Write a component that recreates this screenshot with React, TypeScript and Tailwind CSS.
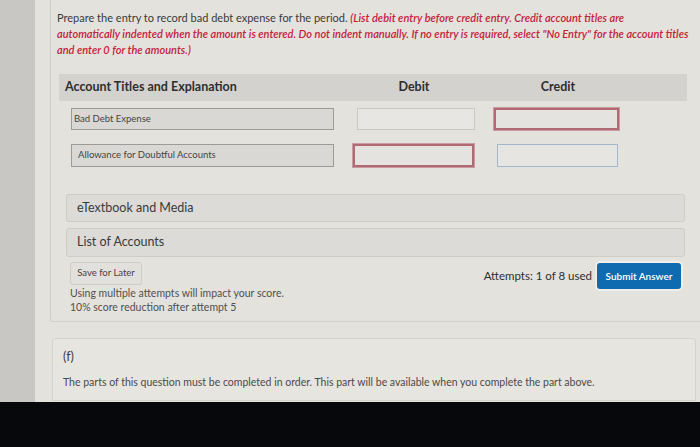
import React from "react";

export default function App() {
  return (
    <div
      className="w-[700px] h-[447px] flex flex-col bg-[#07080b] overflow-hidden"
      style={{ fontFamily: "Lato, 'Open Sans', sans-serif" }}
    >
      <div className="h-[402px] flex bg-[#e4e2dd]">
        <div className="w-[35px] bg-[#c8c7c3]" />
        <div className="flex-1 pl-[15px] flex flex-col">
          <div className="h-[322px] border-l border-b border-[#d2d0cb] rounded-bl-[3px] pl-[6px] pt-[10px] flex flex-col">
            <p className="text-[11px] leading-[16px] text-[#3a3a3a] whitespace-nowrap">
              Prepare the entry to record bad debt expense for the period.{" "}
              <span className="text-[#c4213b] font-semibold italic">
                (List debit entry before credit entry. Credit account titles are
                <br />
                automatically indented when the amount is entered. Do not indent manually. If no entry is required, select "No Entry" for the account titles
                <br />
                and enter 0 for the amounts.)
              </span>
            </p>
            <div className="mt-[16px] ml-[2px] w-[628px] h-[27px] bg-[#d3d2ce] flex items-center text-[12.5px] font-bold text-[#2e2e2e]">
              <div className="w-[296px] pl-[6px]">Account Titles and Explanation</div>
              <div className="w-[118px] text-center">Debit</div>
              <div className="w-[19px]" />
              <div className="w-[132px] text-center">Credit</div>
            </div>
            <div className="mt-[7px] ml-[14px] flex items-center">
              <div className="w-[263px] h-[22px] bg-[#d9d8d4] border border-[#9c9b97] flex items-center pl-[2px] text-[9.5px] text-[#444]">
                Bad Debt Expense
              </div>
              <div className="ml-[23px] w-[118px] h-[22px] bg-[#e7e6e2] border border-[#c9c8c4]" />
              <div className="ml-[19px] w-[125px] h-[22px] bg-[#e5e3df] border-[2px] border-double border-[#b06a74] ring-1 ring-[#c99aa0]" />
            </div>
            <div className="mt-[14px] ml-[14px] flex items-center">
              <div className="w-[263px] h-[23px] bg-[#d9d8d4] border border-[#9c9b97] flex items-center pl-[6px] text-[9.5px] text-[#444]">
                Allowance for Doubtful Accounts
              </div>
              <div className="ml-[19px] w-[121px] h-[23px] bg-[#e5e3df] border-[2px] border-[#b06a74] ring-1 ring-[#c99aa0]" />
              <div className="ml-[23px] w-[121px] h-[23px] bg-[#e6e5e2] border border-[#a4b6c9]" />
            </div>
            <div className="mt-[27px] ml-[9px] w-[619px] h-[28px] bg-[#dcdbd7] border border-[#cfcdc8] rounded-[3px] flex items-center pl-[10px] text-[12.5px] text-[#3a3a3a]">
              eTextbook and Media
            </div>
            <div className="mt-[6px] ml-[9px] w-[619px] h-[29px] bg-[#dcdbd7] border border-[#cfcdc8] rounded-[3px] flex items-center pl-[10px] text-[12.5px] text-[#3a3a3a]">
              List of Accounts
            </div>
            <div className="mt-[1px] ml-[13px] w-[611px] flex items-center">
              <div className="w-[72px] h-[23px] border border-[#cfcdc8] bg-[#e2e0dc] rounded-[3px] flex items-center justify-center text-[9.5px] text-[#444]">
                Save for Later
              </div>
              <div className="flex-1" />
              <div className="text-[11.5px] text-[#2e2e2e] mr-[5px] mt-[4px]">Attempts: 1 of 8 used</div>
              <div className="w-[84px] h-[26px] mt-[5px] bg-[#0e6bb0] rounded-[3px] ring-2 ring-[#eeeeec] flex items-center justify-center text-[10px] font-semibold text-white">
                Submit Answer
              </div>
            </div>
            <div className="ml-[13px] text-[10.5px] leading-[14px] text-[#505050]">
              <div className="-mt-[3px]">Using multiple attempts will impact your score.</div>
              <div>10% score reduction after attempt 5</div>
            </div>
          </div>
          <div className="mt-[16px] ml-[2px] h-[63px] mr-[4px] border border-[#d5d3ce] rounded-t-[3px] bg-[#e7e5e0] pl-[10px] pt-[10px] text-[#3c3c3c]">
            <div className="text-[12.5px] leading-[16px]">(f)</div>
            <div className="mt-[10px] text-[10.5px] leading-[14px] text-[#4a4a4a]">
              The parts of this question must be completed in order. This part will be available when you complete the part above.
            </div>
          </div>
        </div>
      </div>
      <div className="flex-1 bg-[#07080b]" />
    </div>
  );
}
